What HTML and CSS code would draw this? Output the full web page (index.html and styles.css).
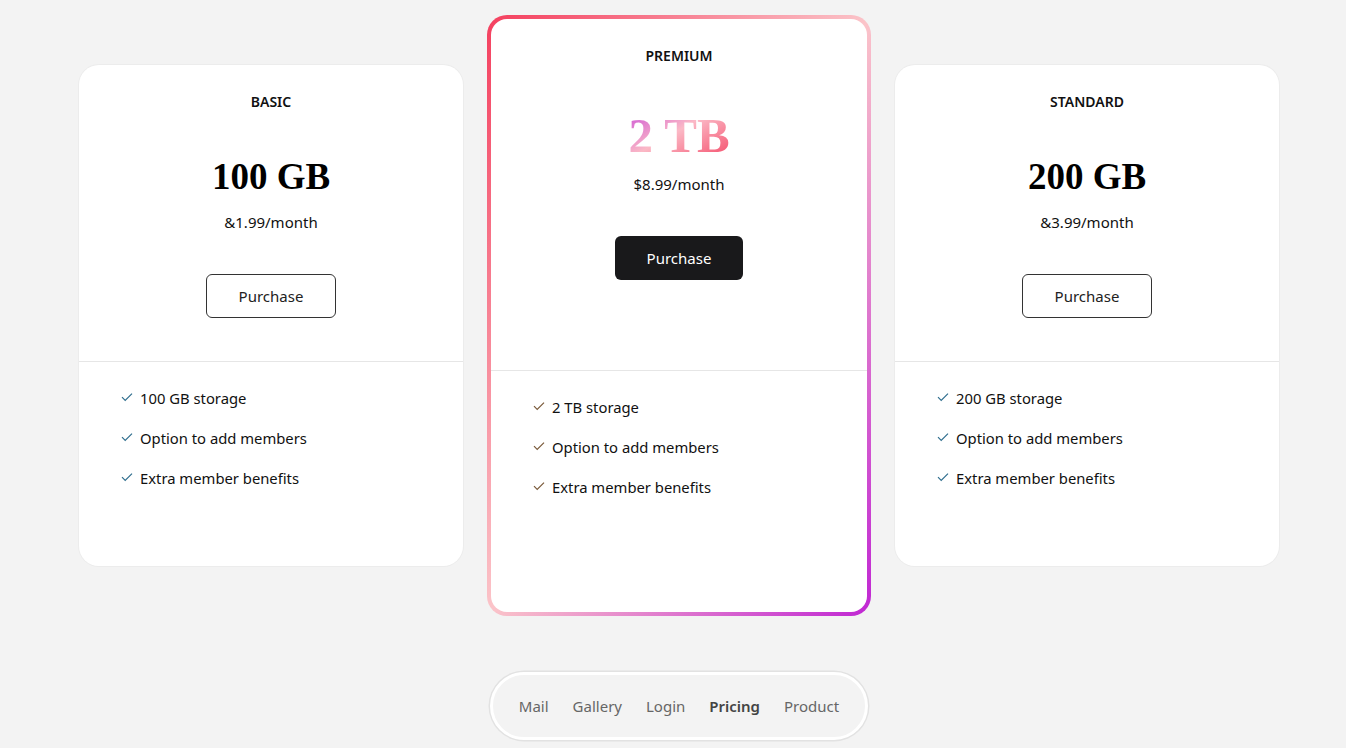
FILE: index.html
```html
<!DOCTYPE html>
<html lang="en">
<head>
<meta charset="utf-8">
<title>Pricing</title>
<link rel="stylesheet" href="styles.css">
</head>
<body>
<main class="page">
  <section class="plans">
    <article class="card">
      <div class="card-top">
        <h2 class="plan-name">BASIC</h2>
        <div class="plan-size">100 GB</div>
        <div class="plan-price">&amp;1.99/month</div>
        <button class="btn btn-outline">Purchase</button>
      </div>
      <ul class="features">
        <li><svg class="check" viewBox="0 0 12 10"><path d="M1 5.2 4.2 8.4 11 1.6"/></svg>100 GB storage</li>
        <li><svg class="check" viewBox="0 0 12 10"><path d="M1 5.2 4.2 8.4 11 1.6"/></svg>Option to add members</li>
        <li><svg class="check" viewBox="0 0 12 10"><path d="M1 5.2 4.2 8.4 11 1.6"/></svg>Extra member benefits</li>
      </ul>
    </article>

    <article class="card card-premium">
      <div class="card-top">
        <h2 class="plan-name">PREMIUM</h2>
        <div class="plan-size plan-size-lg">2 TB</div>
        <div class="plan-price">$8.99/month</div>
        <button class="btn btn-dark">Purchase</button>
      </div>
      <ul class="features">
        <li><svg class="check" viewBox="0 0 12 10"><path d="M1 5.2 4.2 8.4 11 1.6"/></svg>2 TB storage</li>
        <li><svg class="check" viewBox="0 0 12 10"><path d="M1 5.2 4.2 8.4 11 1.6"/></svg>Option to add members</li>
        <li><svg class="check" viewBox="0 0 12 10"><path d="M1 5.2 4.2 8.4 11 1.6"/></svg>Extra member benefits</li>
      </ul>
    </article>

    <article class="card">
      <div class="card-top">
        <h2 class="plan-name">STANDARD</h2>
        <div class="plan-size">200 GB</div>
        <div class="plan-price">&amp;3.99/month</div>
        <button class="btn btn-outline">Purchase</button>
      </div>
      <ul class="features">
        <li><svg class="check" viewBox="0 0 12 10"><path d="M1 5.2 4.2 8.4 11 1.6"/></svg>200 GB storage</li>
        <li><svg class="check" viewBox="0 0 12 10"><path d="M1 5.2 4.2 8.4 11 1.6"/></svg>Option to add members</li>
        <li><svg class="check" viewBox="0 0 12 10"><path d="M1 5.2 4.2 8.4 11 1.6"/></svg>Extra member benefits</li>
      </ul>
    </article>
  </section>

  <nav class="nav">
    <a class="nav-link" href="#">Mail</a>
    <a class="nav-link" href="#">Gallery</a>
    <a class="nav-link" href="#">Login</a>
    <a class="nav-link nav-active" href="#">Pricing</a>
    <a class="nav-link" href="#">Product</a>
  </nav>
</main>
</body>
</html>
```

FILE: styles.css
```css
* {
  box-sizing: border-box;
}

html, body {
  margin: 0;
  padding: 0;
  background: #f3f3f3;
}

body {
  font-family: "Noto Sans", "Open Sans", sans-serif;
  color: #111;
  width: 1346px;
  height: 748px;
  overflow: hidden;
}

.page {
  display: flex;
  flex-direction: column;
  align-items: center;
  padding: 15px 0 0 12px;
}

.plans {
  display: flex;
  align-items: center;
  gap: 24px;
}

.card {
  width: 384px;
  background: #fff;
  border-radius: 20px;
  box-shadow: 0 0 0 1px #ececec;
  display: flex;
  flex-direction: column;
}

.card-top {
  display: flex;
  flex-direction: column;
  align-items: center;
  padding: 27px 0 43px;
  border-bottom: 1px solid #e6e6e6;
}

.plan-name {
  margin: 0;
  font-size: 14px;
  font-weight: 600;
  line-height: 20px;
  color: #111;
}

.plan-size {
  margin-top: 43px;
  font-family: "Liberation Serif", "Times New Roman", serif;
  font-weight: 700;
  font-size: 37px;
  line-height: 44px;
  color: #000;
}

.plan-price {
  margin-top: 12px;
  font-size: 15px;
  line-height: 22px;
  color: #111;
}

.btn {
  margin-top: 41px;
  width: 130px;
  height: 44px;
  border-radius: 6px;
  font-family: inherit;
  font-size: 15px;
  cursor: pointer;
}

.btn-outline {
  background: #fff;
  color: #222;
  border: 1px solid #333;
}

.btn-dark {
  width: 128px;
  background: #19191b;
  color: #fff;
  border: none;
}

.features {
  list-style: none;
  margin: 0;
  padding: 24px 42px 76px;
  display: flex;
  flex-direction: column;
  gap: 16px;
}

.features li {
  display: flex;
  align-items: center;
  gap: 7px;
  font-size: 14.8px;
  line-height: 24px;
  color: #111;
}

.check {
  width: 12px;
  height: 10px;
  fill: none;
  stroke: #2f6e8e;
  stroke-width: 1.2;
  margin-top: -2px;
}

.card-premium {
  border: 4px solid transparent;
  box-shadow: none;
  background:
    linear-gradient(#fff, #fff) padding-box,
    linear-gradient(to bottom right, #f43f5e 0%, #fbc4c9 50%, #c026d3 100%) border-box;
}

.card-premium .card-top {
  padding: 27px 0 90px;
}

.card-premium .plan-size-lg {
  margin-top: 41px;
  font-size: 49px;
  line-height: 58px;
  background: linear-gradient(to bottom right, #c94bd8 0%, #fbb9c6 45%, #f43f5e 100%);
  -webkit-background-clip: text;
  background-clip: text;
  color: transparent;
}

.card-premium .plan-price {
  margin-top: 8px;
}

.card-premium .features {
  padding-bottom: 113px;
}

.card-premium .check {
  stroke: #7a5a3a;
}

.nav {
  margin-top: 56px;
  display: flex;
  align-items: center;
  gap: 24px;
  height: 68px;
  padding: 0 26px;
  border: 3px solid #fff;
  border-radius: 34px;
  box-shadow: 0 0 0 1.5px #e2e2e2;
  background: #f3f3f3;
}

.nav-link {
  font-size: 15px;
  color: #666;
  text-decoration: none;
}

.nav-active {
  font-weight: 600;
  color: #444;
}
```
